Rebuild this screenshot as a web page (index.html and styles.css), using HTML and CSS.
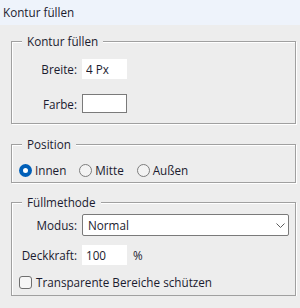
FILE: index.html
```html
<!DOCTYPE html>
<html lang="de">
<head>
    <meta charset="UTF-8">
    <meta name="viewport" content="width=device-width, initial-scale=1.0">
    <title>Kontur füllen</title>
    <link rel="stylesheet" href="styles.css">
</head>
<body>
<header class="titlebar">Kontur füllen</header>

<form class="dialog">
    <fieldset class="group group-stroke">
        <legend>Kontur füllen</legend>
        <div class="row">
            <label for="strokeWidth">Breite:</label>
            <input type="text" id="strokeWidth" class="field field-plain" value="4 Px">
        </div>
        <div class="row">
            <label for="strokeColor">Farbe:</label>
            <input type="text" id="strokeColor" class="field field-boxed">
        </div>
    </fieldset>

    <fieldset class="group group-position">
        <legend>Position</legend>
        <div class="radios">
            <label class="option"><input type="radio" name="position" checked> Innen</label>
            <label class="option"><input type="radio" name="position"> Mitte</label>
            <label class="option"><input type="radio" name="position"> Außen</label>
        </div>
    </fieldset>

    <fieldset class="group group-blend">
        <legend>Füllmethode</legend>
        <div class="row">
            <label for="blendMode">Modus:</label>
            <span class="select-wrap">
                <select id="blendMode" class="select">
                    <option>Normal</option>
                    <option>Multiplizieren</option>
                    <option>Negativ multiplizieren</option>
                </select>
                <svg class="chevron" width="9" height="5" viewBox="0 0 9 5">
                    <polyline points="0.5,0.5 4.5,4.5 8.5,0.5" fill="none" stroke="#5c5c5c" stroke-width="1"/>
                </svg>
            </span>
        </div>
        <div class="row">
            <label for="opacity">Deckkraft:</label>
            <span class="with-unit">
                <input type="text" id="opacity" class="field field-plain" value="100">
                <span class="unit">%</span>
            </span>
        </div>
        <label class="check"><input type="checkbox"> Transparente Bereiche schützen</label>
    </fieldset>
</form>
</body>
</html>
```

FILE: styles.css
```css
body {
    margin: 0;
    background-color: #ededed;
    font-family: 'Open Sans', 'Noto Sans', sans-serif;
    font-size: 11.7px;
    color: #1b1b2f;
}
.titlebar {
    height: 25px;
    line-height: 25px;
    padding-left: 3px;
    background-color: #eef3fb;
}
.dialog {
    padding: 8px 4px 0 11px;
}
.group {
    margin: 0;
    padding: 0;
    border: 1px solid #a0a0a0;
    box-shadow: inset 1px 1px 0 #fff, 1px 1px 0 #fff; /* etched look */
}
.group legend {
    margin-left: 10px;
    padding: 0 5px;
    line-height: 16px;
    background-color: #ededed;
}
.row {
    display: grid;
    grid-template-columns: 65px auto;
    column-gap: 5px;
    align-items: center;
}
.row label {
    text-align: right;
}
.group-stroke {
    padding: 10px 0 10px;
}
.group-stroke .row + .row {
    margin-top: 15px;
}
.field {
    box-sizing: border-box;
    width: 45px;
    height: 20px;
    margin: 0;
    padding: 0 4px;
    font: inherit;
    color: inherit;
    background: #fff;
    outline: none;
}
.field-plain {
    border: none;
}
.field-boxed {
    height: 19px;
    border: 1px solid #7a7a7a;
}
.group-position {
    margin-top: 12px;
}
.radios {
    display: flex;
    gap: 13px;
    padding: 10px 0 4px 7px;
}
.option {
    display: flex;
    align-items: center;
    gap: 3px;
}
input[type="radio"] {
    appearance: none;
    width: 13px;
    height: 13px;
    margin: 0;
    border: 1px solid #7d7d7d;
    border-radius: 50%;
    background: #f3f3f3;
}
input[type="radio"]:checked {
    border: none;
    background: #fff;
    box-shadow: inset 0 0 0 4px #005fb8;
}
.group-blend {
    margin-top: 11px;
    padding: 4px 0 5px;
}
.group-blend .row + .row {
    margin-top: 9px;
}
.select-wrap {
    position: relative;
    display: block;
}
.select {
    appearance: none;
    box-sizing: border-box;
    width: 207px;
    height: 22px;
    margin: 0;
    padding: 0 5px;
    font: inherit;
    color: inherit;
    background: #fff;
    border: 1px solid #7a7a7a;
    border-radius: 2px;
    outline: none;
}
.chevron {
    position: absolute;
    right: 10px;
    top: 9px;
}
.with-unit {
    display: flex;
    align-items: center;
    gap: 6px;
}
.check {
    display: flex;
    align-items: center;
    gap: 4px;
    margin: 9px 0 0 7px;
}
input[type="checkbox"] {
    appearance: none;
    width: 13px;
    height: 13px;
    margin: 0;
    border: 1px solid #6f6f6f;
    border-radius: 3px;
    background: #f6f6f6;
}
```
